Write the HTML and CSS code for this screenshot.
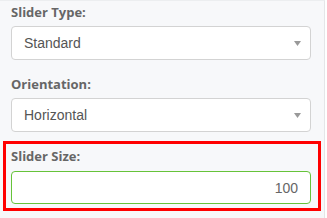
FILE: index.html
```html
<!DOCTYPE html>
<html lang="en">
<head>
  <meta charset="UTF-8">
  <title>Slider Settings</title>
  <link rel="stylesheet" href="styles.css">
</head>
<body>

  <!-- ===== Settings Panel ===== -->
  <div class="panel">
    <div class="form-group">
      <label>Slider Type:</label>
      <div class="select-box">
        <span>Standard</span>
        <svg class="caret" width="7" height="5" viewBox="0 0 7 5"><path d="M0 0H7L3.5 5Z" fill="#999"/></svg>
      </div>
    </div>

    <div class="form-group last">
      <label>Orientation:</label>
      <div class="select-box">
        <span>Horizontal</span>
        <svg class="caret" width="7" height="5" viewBox="0 0 7 5"><path d="M0 0H7L3.5 5Z" fill="#999"/></svg>
      </div>
    </div>

    <div class="form-group highlight">
      <label>Slider Size:</label>
      <input class="text-input" type="text" value="100">
    </div>
  </div>

</body>
</html>
```

FILE: styles.css
```css
/* ===== Basic Reset ===== */
body {
  margin: 0;
  background: #fff;
  font-family: 'Open Sans', sans-serif;
}

/* ===== Panel ===== */
.panel {
  width: 325px;
  height: 218px;
  box-sizing: border-box;
  background: #f7f8fa;
  border-top: 1px solid #eceef0;
  border-right: 1px solid #e4e6e8;
  padding: 2px 0 0 11px;
}
.form-group {
  width: 300px;
  display: flex;
  flex-direction: column;
  margin-bottom: 15px;
}
.form-group.last {
  margin-bottom: 9px;
}
.form-group label {
  font-size: 13px;
  font-weight: bold;
  line-height: 18px;
  color: #666;
  margin-bottom: 5px;
}

/* ===== Select boxes ===== */
.select-box {
  height: 34px;
  box-sizing: border-box;
  background: #fff;
  border: 1px solid #d3d3d3;
  border-radius: 4px;
  display: flex;
  align-items: center;
  justify-content: space-between;
  padding: 0 9px 0 12px;
  font-family: 'Liberation Sans', Arial, sans-serif;
  font-size: 14px;
  color: #555;
}

/* ===== Highlighted group ===== */
.highlight {
  margin: 0 0 0 -8px;
  width: 318px;
  box-sizing: border-box;
  border: 3px solid #ff0000;
  padding: 3px 7px 4px 5px;
}
.highlight label {
  margin-bottom: 6px;
}
.text-input {
  height: 33px;
  box-sizing: border-box;
  border: 1px solid #66c33a;
  border-radius: 4px;
  background: #fff;
  padding: 0 12px;
  text-align: right;
  font-family: 'Liberation Sans', Arial, sans-serif;
  font-size: 14px;
  color: #666;
  outline: none;
}
```
